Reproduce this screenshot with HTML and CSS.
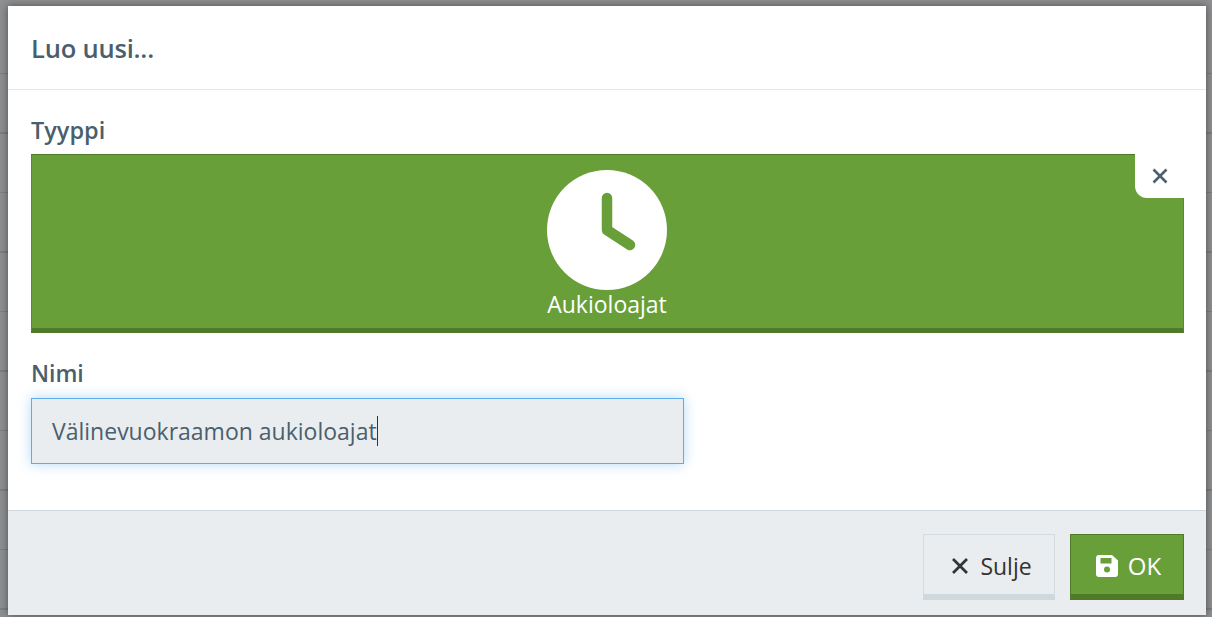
FILE: index.html
```html
<!DOCTYPE html>
<html lang="fi">
<head>
<meta charset="UTF-8">
<title>Luo uusi</title>
<link rel="stylesheet" href="styles.css">
</head>
<body>
<div class="modal">
  <div class="modal-header">
    <h4 class="modal-title">Luo uusi...</h4>
  </div>

  <div class="modal-body">
    <label class="field-label">Tyyppi</label>
    <div class="type-card">
      <button class="type-remove">
        <svg width="18" height="18" viewBox="0 0 18 18"><path d="M2.500 2.500l13 13M15.500 2.500l-13 13" stroke="#4a6070" stroke-width="2.600" fill="none"/></svg>
      </button>
      <svg class="type-icon" width="120" height="120" viewBox="0 0 120 120">
        <circle cx="60" cy="60" r="60" fill="#fff"/>
        <path d="M60 28v32l23 15" stroke="#689f38" stroke-width="10.500" stroke-linecap="round" stroke-linejoin="round" fill="none"/>
      </svg>
      <div class="type-name">Aukioloajat</div>
    </div>

    <label class="field-label field-label-name">Nimi</label>
    <div class="name-input">Välinevuokraamon aukioloajat<span class="caret"></span></div>
  </div>

  <div class="modal-footer">
    <button class="btn btn-close">
      <svg width="18" height="18" viewBox="0 0 18 18"><path d="M2 2l14 14M16 2L2 16" stroke="#333" stroke-width="2.800" fill="none"/></svg>
      Sulje
    </button>
    <button class="btn btn-ok">
      <svg width="22" height="22" viewBox="0 0 22 22"><path fill-rule="evenodd" d="M3 0h13l6 5.500V19a3 3 0 0 1-3 3H3a3 3 0 0 1-3-3V3a3 3 0 0 1 3-3zm1.500 3v5.500h11V3zM11 11.500a3 3 0 1 0 0 6 3 3 0 0 0 0-6z" fill="#fff"/></svg>
      OK
    </button>
  </div>
</div>
</body>
</html>
```

FILE: styles.css
```css
html,body{height:100%}
body{margin:0;overflow:hidden;font-family:"Open Sans","Noto Sans",Arial,sans-serif;background:repeating-linear-gradient(180deg,#8e8f91 0,#8e8f91 58px,#7d7e80 58px,#7d7e80 59.500px);background-position:0 15px;padding:6px 6px 2px 8px;box-sizing:border-box}
.modal{height:609px;display:flex;flex-direction:column;background:#fff;box-shadow:0 0 8px rgba(0,0,0,.45)}
.modal-header{height:83px;border-bottom:1px solid #e4e6e8;padding:0 23px;display:flex;align-items:center;flex:none}
.modal-title{margin:0;font-size:25.500px;font-weight:600;color:#4a5f6d;letter-spacing:-.2px}
.modal-body{flex:1;padding:26px 22px 0 23px}
.field-label{display:block;font-size:23.500px;font-weight:600;color:#4a5f6d;line-height:28px;margin-bottom:10px}
.field-label-name{margin-top:26px;margin-bottom:11px;font-size:23px}
.type-card{position:relative;height:158px;background:#689f38;border:1px solid #4f7a28;border-bottom:5px solid #4f7a28;border-left-color:#5a8a31;border-right-color:#5a8a31;display:flex;flex-direction:column;align-items:center;padding:15px 1px 0 0}
.type-remove{position:absolute;top:-1px;right:-1px;width:49px;height:44px;padding:0;background:#fff;border:0;border-bottom-left-radius:12px;display:flex;align-items:center;justify-content:center}
.type-icon{flex:none}
.type-name{color:#fff;font-size:23px;line-height:28px}
.name-input{width:653px;height:66px;box-sizing:border-box;background:#e9edf0;border:1px solid #62aae9;box-shadow:0 0 12px rgba(90,170,240,.45);padding:0 20px;display:flex;align-items:center;font-size:23px;color:#4b5f6d}
.caret{width:1px;height:30px;background:#333}
.modal-footer{height:105px;flex:none;box-sizing:border-box;background:#e9edf0;border-top:1px solid #cfd8dc;padding:23px 22px 0 0;display:flex;justify-content:flex-end;gap:15px}
.btn{height:66px;box-sizing:border-box;font-family:inherit;font-size:23px;display:flex;align-items:center;justify-content:center;gap:11px;padding:2px 0 0}
.btn-close{width:132px;background:#e9edf0;color:#333;border:1px solid #d3dbe0;border-bottom:6px solid #cfd8dc;padding-left:5px}
.btn-ok{width:114px;background:#689f38;color:#fff;border:1px solid #4f7a28;border-bottom:6px solid #4f7a28;font-size:24px;padding-left:3px;gap:10px}
```
